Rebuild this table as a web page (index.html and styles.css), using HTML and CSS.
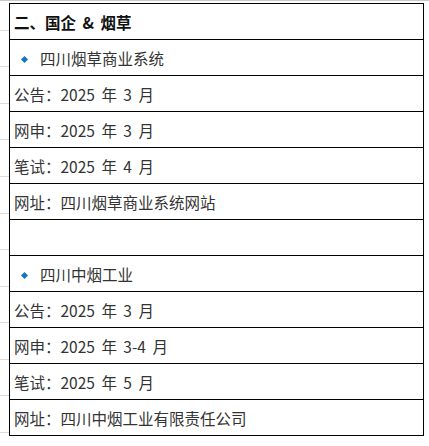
FILE: index.html
```html
<!DOCTYPE html>
<html lang="zh-CN">
<head>
<meta charset="utf-8">
<link rel="stylesheet" href="styles.css">
</head>
<body>
<div class="sheet">
  <table class="grid">
    <tr><td class="head">二、国企 &amp; 烟草</td></tr>
    <tr><td class="sub"><span class="dot"></span>四川烟草商业系统</td></tr>
    <tr><td>公告：2025 年 3 月</td></tr>
    <tr><td>网申：2025 年 3 月</td></tr>
    <tr><td>笔试：2025 年 4 月</td></tr>
    <tr><td>网址：四川烟草商业系统网站</td></tr>
    <tr><td></td></tr>
    <tr><td class="sub"><span class="dot"></span>四川中烟工业</td></tr>
    <tr><td>公告：2025 年 3 月</td></tr>
    <tr><td>网申：2025 年 3-4 月</td></tr>
    <tr><td>笔试：2025 年 5 月</td></tr>
    <tr><td>网址：四川中烟工业有限责任公司</td></tr>
  </table>
</div>
</body>
</html>
```
FILE: styles.css
```css
html, body {
  margin: 0;
  padding: 0;
  background: #fff;
}
.sheet {
  width: 429px;
  height: 446px;
  box-sizing: border-box;
  padding: 2px 0 0 9px;
  border-top: 1px solid #c8c8c8;
  background-image: repeating-linear-gradient(to bottom, transparent 0, transparent 29px, #dcdcdc 29px, #dcdcdc 30px, transparent 30px, transparent 36.5px);
  background-size: 9px 100%;
  background-repeat: no-repeat;
  overflow: hidden;
}
.grid {
  border-collapse: collapse;
  width: 415px;
  font-family: "Noto Sans CJK SC", "Microsoft YaHei", sans-serif;
  font-size: 15.5px;
  color: #333;
  background: #fff;
  word-spacing: 3px;
}
.grid td {
  border: 1px solid #000;
  height: 36px;
  padding: 0 0 0 4px;
  box-sizing: border-box;
  line-height: 20px;
  white-space: nowrap;
}
.grid td.head {
  font-weight: bold;
  color: #111;
}
.grid td.sub {
  padding-left: 12px;
}
.dot {
  display: inline-block;
  width: 5px;
  height: 5px;
  background: #1a73c0;
  transform: rotate(45deg);
  margin: 0 13px 2px 0;
  vertical-align: middle;
}
```
